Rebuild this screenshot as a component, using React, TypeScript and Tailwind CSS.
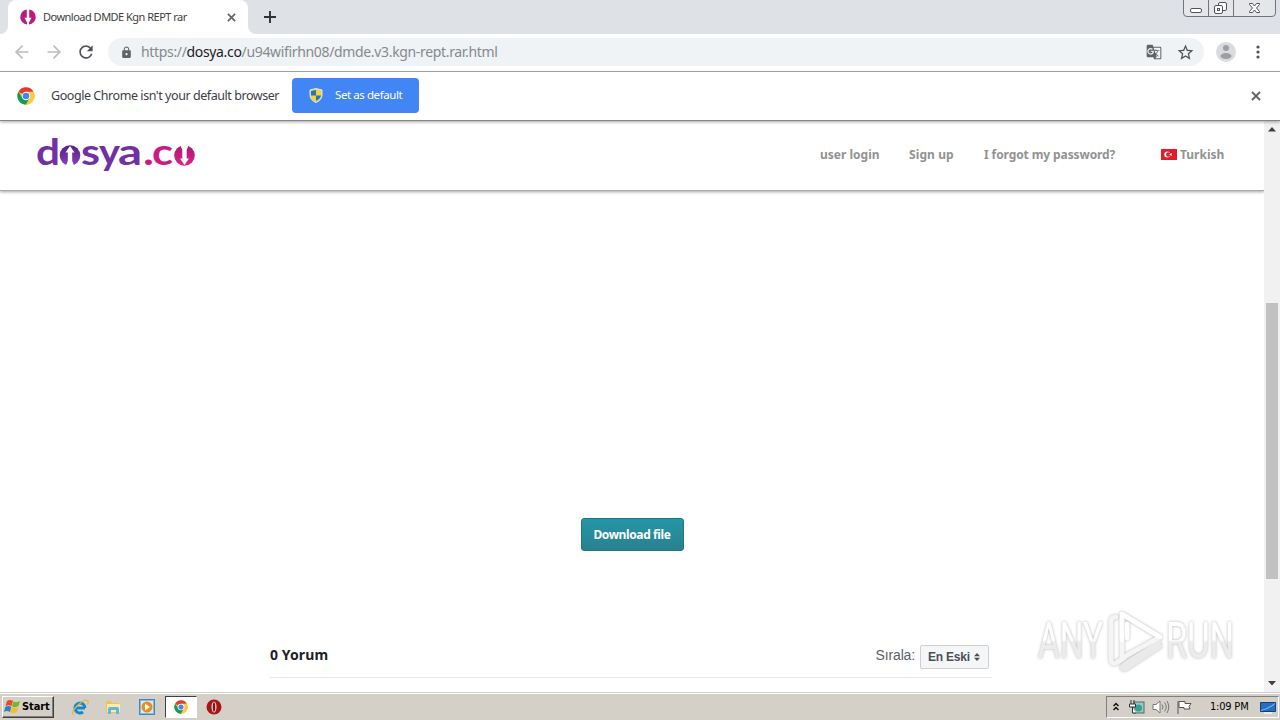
import type { ReactNode } from "react";
import { ArrowLeft, ArrowRight } from "lucide-react";
import { MdLock, MdRefresh, MdStarBorder, MdGTranslate } from "react-icons/md";

const navLinks = [
  { label: "user login", className: "w-[89px]" },
  { label: "Sign up", className: "w-[75px] tracking-[0.1px]" },
  { label: "I forgot my password?", className: "w-[177px] tracking-[-0.1px]" },
];

function ChromeIcon({ className }: { className: string }) {
  return (
    <svg viewBox="0 0 24 24" className={className}>
      <circle cx="12" cy="12" r="11.5" fill="#fbc02d" />
      <path d="M12 12 2.04 6.25A11.5 11.5 0 0 1 21.96 6.25L12 7Z" fill="#e33b2e" />
      <path d="M2.04 6.25A11.5 11.5 0 0 0 12 23.5L16.8 14.8 12 12 7.4 14.6Z" fill="#159b57" />
      <path d="M12 6.25h9.96A11.5 11.5 0 0 1 12 23.5l5-8.6Z" fill="#fdcb3e" />
      <circle cx="12" cy="12" r="5.7" fill="#fff" />
      <circle cx="12" cy="12" r="4.4" fill="#4285f4" />
    </svg>
  );
}

function CloseIcon({ className }: { className: string }) {
  return (
    <svg viewBox="0 0 10 10" className={className} fill="none" stroke="currentColor" strokeWidth="1.8">
      <path d="m1 1 8 8M9 1 1 9" />
    </svg>
  );
}

function TabFavicon() {
  return (
    <svg viewBox="0 0 16 16" className="h-4 w-4 shrink-0">
      <path d="M6.800.6v8.200H4.500L7 13.500v2A7.500 7.500 0 0 1 6.800.6Z" fill="#b71c86" />
      <path d="M9.200.6v8.200h2.300L9 13.500v2A7.500 7.500 0 0 0 9.200.6Z" fill="#c2187c" />
    </svg>
  );
}

function WindowButtons() {
  return (
    <svg viewBox="0 0 94 18" className="h-[18px] w-[94px]" fill="none" stroke="#70757d">
      <path d="M.5 0v13q0 3.500 3.500 3.500h85q3.500 0 3.500-3.500V0" fill="#e4e6ea" />
      <path d="M25.500 0v16M50.500 0v16" />
      <g stroke="#50555d">
        <rect x="7.500" y="8.500" width="11" height="4" rx="1.500" fill="#fff" />
        <rect x="35.500" y="2.500" width="8" height="8" rx="1.500" fill="#fff" />
        <rect x="31.500" y="5.500" width="8" height="8" rx="1.500" fill="#fff" />
        <rect x="34.500" y="8.500" width="2" height="2" />
        <path
          d="M66.500 3.500h3l2 2.500 2-2.500h3v1L73.500 8l3 3.500v1h-3l-2-2.500-2 2.500h-3v-1l3-3.500-3-3.500Z"
          fill="#fff"
        />
      </g>
    </svg>
  );
}

function TabStrip() {
  return (
    <div className="flex h-[34px] shrink-0 justify-between bg-[#dee1e6]">
      <div className="flex">
        <div className="w-2 bg-white">
          <div className="h-full rounded-br-lg bg-[#dee1e6]" />
        </div>
        <div className="flex w-[240px] items-center rounded-t-lg bg-white pl-3">
          <TabFavicon />
          <span className="ml-[7px] w-[184px] whitespace-nowrap text-[11px] tracking-[-0.51px] text-[#3c4043]">
            Download DMDE Kgn REPT rar
          </span>
          <CloseIcon className="h-[9px] w-[9px] text-[#5f6368]" />
        </div>
        <div className="w-2 bg-white">
          <div className="h-full rounded-bl-lg bg-[#dee1e6]" />
        </div>
        <svg viewBox="0 0 12 12" className="ml-2 mt-[11px] h-3 w-3" stroke="#303236" strokeWidth="1.900">
          <path d="M6 0v12M0 6h12" />
        </svg>
      </div>
      <div className="pr-[3px]">
        <WindowButtons />
      </div>
    </div>
  );
}

function Toolbar() {
  return (
    <div className="flex h-[38px] shrink-0 items-center border-b border-[#a9acb1] bg-white pb-px">
      <ArrowLeft className="ml-3 h-5 w-5 text-[#b9bbbe]" strokeWidth={2} />
      <ArrowRight className="ml-3 h-5 w-5 text-[#b9bbbe]" strokeWidth={2} />
      <MdRefresh className="ml-3 h-5 w-5 text-[#505458]" />
      <div className="ml-3 flex h-7 w-[1096px] items-center rounded-full bg-[#f0f3f5] pl-3">
        <MdLock className="h-[13px] w-[13px] text-[#5f6368]" />
        <span className="-mt-px ml-2 flex-1 whitespace-nowrap text-[14px] tracking-[-0.34px] text-[#85898e]">
          https://<span className="text-[#202124]">dosya.co</span>/u94wifirhn08/dmde.v3.kgn-rept.rar.html
        </span>
        <MdGTranslate className="h-4 w-4 text-[#5f6368]" />
        <MdStarBorder className="ml-[14px] mr-[9px] h-[19px] w-[19px] text-[#505458]" />
      </div>
      <svg viewBox="0 0 20 20" className="ml-3 h-5 w-5">
        <circle cx="10" cy="10" r="10" fill="#d9dbde" />
        <circle cx="10" cy="6" r="3" fill="#9b9ea2" />
        <ellipse cx="10" cy="14" rx="5.500" ry="3" fill="#9b9ea2" />
      </svg>
      <svg viewBox="0 0 4 14" className="ml-5 h-[14px] w-1" fill="#505458">
        <circle cx="2" cy="2" r="1.600" />
        <circle cx="2" cy="7" r="1.600" />
        <circle cx="2" cy="12" r="1.600" />
      </svg>
    </div>
  );
}

function InfoBar() {
  return (
    <div className="z-10 flex h-[49px] shrink-0 items-center border-b border-[#858585] bg-white pb-px shadow-[0_1px_3px_rgba(0,0,0,0.35)]">
      <ChromeIcon className="ml-[17px] h-[18px] w-[18px]" />
      <span className="ml-4 mt-px w-[241px] whitespace-nowrap text-[12.5px] tracking-[-0.44px] text-[#3c4043]">
        Google Chrome isn't your default browser
      </span>
      <button className="flex h-[35px] w-[127px] items-center rounded bg-[#4285f4] pl-[17px] text-white">
        <svg viewBox="0 0 14 15" className="h-[15px] w-[14px]">
          <path d="M7 .5 13 2v5q0 5-6 7.500Q1 12 1 7V2Z" fill="#f6d33c" />
          <path d="M7 2v5.500H2V3ZM7 7.500h5q-.5 3-5 5.500Z" fill="#2377b8" />
          <path d="M7 .5 13 2v5q0 5-6 7.500Q1 12 1 7V2Z" fill="none" stroke="#dce7ee" />
        </svg>
        <span className="-mt-px ml-3 whitespace-nowrap text-[11.5px] tracking-[-0.42px]">Set as default</span>
      </button>
      <CloseIcon className="ml-auto mr-[19px] h-[10px] w-[10px] text-[#5f6368]" />
    </div>
  );
}

function SiteLogo() {
  return (
    <svg viewBox="0 0 160 48" className="h-12 w-40 overflow-visible">
      <defs>
        <linearGradient id="purple" x1="0" y1="0" x2="0" y2="1">
          <stop offset="0" stopColor="#552083" />
          <stop offset="1" stopColor="#8b40bb" />
        </linearGradient>
        <linearGradient id="pink" x1="0" y1="0" x2="0" y2="1">
          <stop offset="0" stopColor="#a81870" />
          <stop offset="1" stopColor="#e0218e" />
        </linearGradient>
      </defs>
      <g className="font-['Lato']" fontWeight="700" fontSize="37" fill="#7130a3">
        <text x="-1" y="35" textLength="24" lengthAdjust="spacingAndGlyphs">d</text>
        <text x="44" y="35" textLength="19" lengthAdjust="spacingAndGlyphs">s</text>
        <text x="62" y="35" textLength="21" lengthAdjust="spacingAndGlyphs">y</text>
        <text x="81" y="35" textLength="24" lengthAdjust="spacingAndGlyphs">a</text>
        <g fill="#c91c82">
          <text x="106" y="35" textLength="11" lengthAdjust="spacingAndGlyphs">.</text>
          <text x="115" y="35" textLength="21" lengthAdjust="spacingAndGlyphs">c</text>
        </g>
      </g>
      {/* split discs with arrows in place of the letter o */}
      <circle cx="33" cy="25.500" r="10.300" fill="url(#purple)" />
      <path d="m33 16 4.500 6.500h-2.300V31l2.300 5.500h-9l2.300-5.500v-8.500h-2.300Z" fill="#fff" />
      <circle cx="147.500" cy="25.500" r="10.300" fill="url(#pink)" />
      <path d="m147.500 35-4.500-6.500h2.300V20L143 14.500h9l-2.300 5.500v8.500h2.300Z" fill="#fff" />
    </svg>
  );
}

function TurkishFlag() {
  return (
    <svg viewBox="0 0 16 11" className="mb-[2px] mr-[3px] h-[11px] w-4">
      <rect width="16" height="11" fill="#e41b2b" />
      <circle cx="6.300" cy="5.500" r="3" fill="#fff" />
      <circle cx="7.300" cy="5.500" r="2.200" fill="#e41b2b" />
      <path d="m8 5.500 3-1.500-.5 1.500.5 1.500Z" fill="#fff" />
    </svg>
  );
}

function SiteHeader() {
  return (
    <header className="flex h-[70px] shrink-0 items-center border-b border-[#aaa] bg-white pb-[3px] pl-[37px] shadow-[0_1px_3px_rgba(0,0,0,0.35)]">
      <SiteLogo />
      <nav className="ml-[623px] mt-[2px] flex items-center whitespace-nowrap font-['Noto_Sans','Liberation_Sans',sans-serif] text-[12px] font-bold text-[#929292]">
        {navLinks.map((link) => (
          <a key={link.label} className={link.className}>
            {link.label}
          </a>
        ))}
        <a className="flex items-center">
          <TurkishFlag />
          <span>Turkish</span>
        </a>
      </nav>
    </header>
  );
}

function Comments() {
  return (
    <section className="ml-[270px] mt-[93px] flex h-[34px] w-[722px] justify-between border-b border-[#e7e7e9] pr-[3px]">
      <h2 className="mt-px font-['Noto_Sans',sans-serif] text-[14px] font-bold leading-5 tracking-[0.1px] text-[#1d2129]">
        0 Yorum
      </h2>
      <div className="flex items-start font-['Liberation_Sans',sans-serif]">
        <span className="mr-[5px] mt-px text-[14px] leading-5 tracking-[-0.15px] text-[#5b5f66]">Sırala:</span>
        <button className="mt-px flex h-6 w-[69px] items-center whitespace-nowrap rounded-[2px] border border-[#ced0d4] bg-[#f5f6f7] pl-[7px] text-[12px] font-bold tracking-[-0.2px] text-[#4b4f56]">
          En Eski
          <svg viewBox="0 0 6 8" className="ml-1 h-2 w-[6px]" fill="#4b4f56">
            <path d="M3 0 6 3.300H0ZM3 8 0 4.700h6Z" />
          </svg>
        </button>
      </div>
    </section>
  );
}

function Watermark() {
  return (
    <svg viewBox="0 0 220 76" className="absolute left-[1030px] top-[602px] h-[76px] w-[220px]">
      <defs>
        <linearGradient id="mark" x1="0" y1="0" x2="0" y2="1">
          <stop offset=".48" stopColor="#fff" />
          <stop offset=".52" stopColor="#ececec" />
        </linearGradient>
        <filter id="halo">
          <feDropShadow dx="0" dy="0" stdDeviation="1.800" floodColor="#888" floodOpacity=".65" />
        </filter>
      </defs>
      <g filter="url(#halo)">
        <g className="font-['Roboto']" fontSize="50" fontWeight="400" fill="url(#mark)">
          <text x="8" y="56" textLength="65" lengthAdjust="spacingAndGlyphs">ANY</text>
          <text x="136" y="56" textLength="68" lengthAdjust="spacingAndGlyphs">RUN</text>
        </g>
        <g fill="none" strokeWidth="4.500" strokeLinejoin="round" strokeLinecap="round">
          <path d="M86 15q-5 0-5 5v37q0 6 5 4l8-5" stroke="#f5f5f5" />
          <path d="m129 40-35 23q-4 4 1 4l35-23" stroke="#eaeaea" />
          <path d="M92 12v44l38-21Z" stroke="#f5f5f5" />
          <path d="m92 12 38 23M92 12v26M97 22v14" stroke="#fff" />
        </g>
      </g>
    </svg>
  );
}

function Scrollbar() {
  return (
    <div className="flex w-4 shrink-0 flex-col items-center bg-[#f1f1f1] pt-[6px]">
      <svg viewBox="0 0 8 5" className="h-[5px] w-2" fill="#404040">
        <path d="m4 0 4 4.500H0Z" />
      </svg>
      <div className="mt-[171px] h-[276px] w-3 bg-[#c1c1c1]" />
      <svg viewBox="0 0 8 5" className="mt-[102px] h-[5px] w-2" fill="#404040">
        <path d="M0 0h8L4 4.500Z" />
      </svg>
    </div>
  );
}

function TaskItem({ children }: { children: ReactNode }) {
  return <div className="flex h-[22px] w-[33px] items-center justify-center">{children}</div>;
}

function Taskbar() {
  return (
    <footer className="z-10 flex h-7 shrink-0 items-start justify-between border-t border-[#d4d0c8] bg-[#d4d0c8] pt-[2px] shadow-[inset_0_1px_0_#fff]">
      <div className="flex items-center pl-[2px]">
        <button className="mr-[9px] mt-px flex h-[22px] w-[52px] items-center border border-b-[#404040] border-l-white border-r-[#404040] border-t-white pl-px font-['DejaVu_Sans_Condensed','DejaVu_Sans',sans-serif] text-[11px] font-bold tracking-[-0.1px] text-black shadow-[inset_-1px_-1px_#808080]">
          <svg viewBox="0 0 17 16" className="mr-px h-4 w-[17px] shrink-0">
            <path d="M3 2q3-2 6 0L7.500 7Q4.500 5.500 1.500 7Z" fill="#e94b24" />
            <path d="M9.500 2.500Q13 4 16 2l-1.500 5q-3 2-6.500.5Z" fill="#74b52f" />
            <path d="M1.300 8q3-2 6 0L6 13q-3-2-6 0Z" fill="#2d82c7" />
            <path d="M7.800 8.300Q11 10 14.300 8L13 13q-3 2-6.500.500Z" fill="#f8bd22" />
          </svg>
          <span className="mt-px">Start</span>
        </button>
        <TaskItem>
          <svg viewBox="0 0 18 18" className="h-[18px] w-[18px]" fill="none">
            <path d="M14 10H5M14 10a5 5 0 1 0-2 4" stroke="#1687d1" strokeWidth="3" />
            <path d="M2.500 16.500q-3-2 4-9t10-5q1.500 1 0 4" stroke="#e5b83c" strokeWidth="1.200" />
          </svg>
        </TaskItem>
        <TaskItem>
          <svg viewBox="0 0 16 16" className="h-4 w-4">
            <path d="M1 2h5l1 2h7v10H1Z" fill="#e8c45a" />
            <path d="M2 5h13v8H2Z" fill="#faedaa" />
            <path d="M3 15V10q0-2 2-2h7q2 0 2 2v5h-3v-4H6v4Z" fill="#67b4dc" />
          </svg>
        </TaskItem>
        <TaskItem>
          <svg viewBox="0 0 16 16" className="ml-[2px] h-4 w-4">
            <rect x=".5" y=".5" width="15" height="15" fill="#7fbce5" stroke="#3f88bf" />
            <rect x="2" y="2" width="12" height="12" fill="#d9eaf5" />
            <circle cx="8" cy="8" r="5.500" fill="#f38a16" />
            <path d="m6 4.500 5 3.500-5 3.500Z" fill="#fff" />
          </svg>
        </TaskItem>
        <div className="ml-[3px] flex h-[22px] w-8 items-center justify-center border border-b-white border-l-[#404040] border-r-white border-t-[#404040] bg-white">
          <ChromeIcon className="h-[14px] w-[14px]" />
        </div>
        <TaskItem>
          <svg viewBox="0 0 16 16" className="ml-px h-4 w-4">
            <circle cx="8" cy="8" r="7.500" fill="#a91419" />
            <ellipse cx="8" cy="8" rx="2.500" ry="5.500" fill="#f3d7d7" />
            <ellipse cx="8" cy="8" rx="1.200" ry="4.700" fill="#861014" />
          </svg>
        </TaskItem>
      </div>
      <div className="mr-px mt-px flex h-[22px] w-[173px] items-center border border-b-white border-l-[#808080] border-r-white border-t-[#808080] pl-[6px] text-[11px] text-black">
        <svg viewBox="0 0 6 9" className="mb-[2px] h-[9px] w-[6px]" fill="none" stroke="#111" strokeWidth="1.500">
          <path d="m.5 4L3 1.500 5.500 4M.5 8 3 5.500 5.500 8" />
        </svg>
        <svg viewBox="0 0 17 16" className="ml-[9px] h-4 w-[17px]">
          <rect x="6" y="3" width="10" height="11" fill="#9cc8c4" stroke="#596669" />
          <circle cx="10.500" cy="9" r="3.500" fill="#31a293" />
          <path d="M3 1v4M6 1v4M1.500 5h6v3h-6ZM4.500 8v6H8" fill="#fff" stroke="#333" />
        </svg>
        <svg viewBox="0 0 18 16" className="ml-[7px] h-4 w-[18px]" fill="none" stroke="#777">
          <path d="M1 5.500h3L8 2v12l-4-3.500H1Z" fill="#fff" />
          <path d="M10 5.500q2 2.500 0 5M12.500 3.500q3.500 4.500 0 9M15 2q3.500 6 0 12" />
        </svg>
        <svg viewBox="0 0 17 16" className="ml-[6px] h-4 w-[17px]" fill="#fff" stroke="#555">
          <path d="M2 2v13M3 2.500h6v2h6l-2 3 1 2.500H8V8.500H3Z" />
        </svg>
        <span className="ml-[17px] mt-px w-[50px] whitespace-nowrap font-['DejaVu_Sans_Condensed','DejaVu_Sans',sans-serif] tracking-[-0.2px]">
          1:09 PM
        </span>
        <svg viewBox="0 0 16 13" className="mt-px h-[13px] w-4">
          <path d="M.5 1.500h15v9H.5Z" fill="#286dbe" stroke="#153e73" />
          <path d="M1 9q6-1 14-7v1Q8 9 1 10Z" fill="#74b8ee" />
          <path d="M4 12h8" stroke="#eef5fb" strokeWidth="1.500" />
        </svg>
      </div>
    </footer>
  );
}

export default function App() {
  return (
    <div className="relative flex h-[720px] w-[1280px] flex-col overflow-hidden bg-white font-['Noto_Sans','DejaVu_Sans',sans-serif]">
      <TabStrip />
      <Toolbar />
      <InfoBar />
      <div className="flex min-h-0 flex-1">
        <main className="flex flex-1 flex-col">
          <SiteHeader />
          <button className="mt-[327px] h-[33px] w-[103px] self-center whitespace-nowrap rounded-[3px] border border-[#1d7780] bg-gradient-to-b from-[#2496a6] to-[#28818f] text-[12px] font-bold tracking-[-0.38px] text-white">
            Download file
          </button>
          <Comments />
        </main>
        <Scrollbar />
      </div>
      <Watermark />
      <Taskbar />
    </div>
  );
}
